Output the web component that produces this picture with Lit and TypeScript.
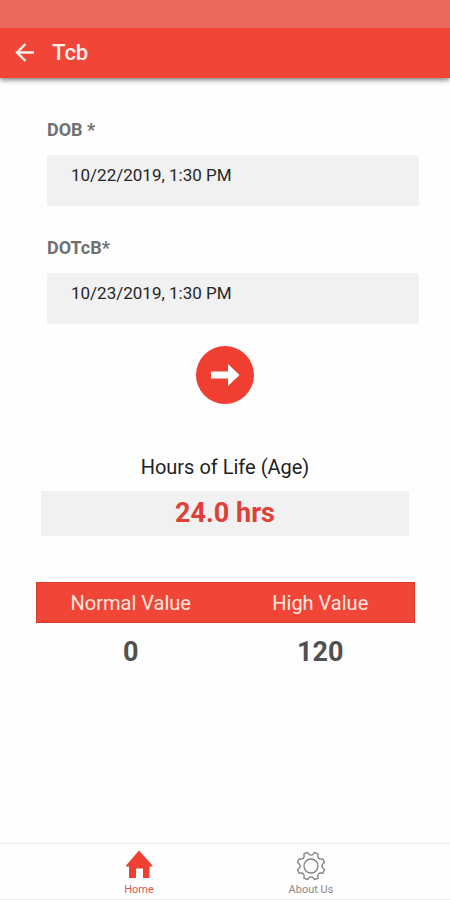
import { LitElement, html, css } from "lit";
import { customElement, state } from "lit/decorators.js";

/** Outline of an eight-toothed gear centred on the origin. */
function gearPath(outer: number, root: number, teeth: number): string {
  const step = 360 / teeth;
  const at = (r: number, deg: number) => {
    const a = (deg * Math.PI) / 180;
    return `${(r * Math.cos(a)).toFixed(2)} ${(r * Math.sin(a)).toFixed(2)}`;
  };
  let d = "";
  for (let i = 0; i < teeth; i++) {
    const mid = step / 2 + i * step;
    d += `${i === 0 ? "M" : "L"}${at(outer, mid - 8)}`;
    d += `L${at(outer, mid + 8)}`;
    d += `L${at(root + 1, mid + 12)}`;
    d += `Q${at(root - 1, mid + step / 2)} ${at(root + 1, mid + step - 12)}`;
  }
  return d + "Z";
}

@customElement("app-root")
export class AppRoot extends LitElement {
  @state() private dob = "10/22/2019, 1:30 PM";
  @state() private measured = "10/23/2019, 1:30 PM";

  static styles = css`
    :host {
      display: flex;
      flex-direction: column;
      min-height: 100vh;
      background: #fefefe;
      font-family: Roboto, "Liberation Sans", sans-serif;
      color: #222;
    }
    * {
      box-sizing: border-box;
    }
    .status {
      height: 28px;
      background: #e8685b;
    }
    .bar {
      display: flex;
      align-items: center;
      gap: 16px;
      height: 50px;
      padding: 0 14px;
      background: #f14637;
      box-shadow: 0 2px 5px rgba(0, 0, 0, 0.5);
      clip-path: inset(0 0 -10px);
    }
    .back {
      display: flex;
      padding: 0;
      border: 0;
      background: none;
      color: #fff0ea;
    }
    .title {
      margin: 0;
      font-size: 22px;
      line-height: 28px;
      font-weight: 500;
      color: #fff0ea;
    }
    main {
      flex: 1;
    }
    .form {
      display: flex;
      flex-direction: column;
      padding: 40px 31px 0 47px;
    }
    .label {
      font-size: 18px;
      line-height: 24px;
      font-weight: 700;
      color: #707070;
    }
    .field {
      width: 100%;
      height: 51px;
      margin: 13px 0 30px;
      padding: 0 24px 12px;
      border: 0;
      border-radius: 2px;
      background: #f1f1f1;
      font: 400 17px Roboto, "Liberation Sans", sans-serif;
      color: #262626;
    }
    .go {
      display: flex;
      align-items: center;
      justify-content: center;
      width: 58px;
      height: 58px;
      margin: -8px auto 0;
      padding: 0;
      border: 0;
      border-radius: 50%;
      background: #f03e31;
      color: #fff;
    }
    .result {
      margin: 51px 41px 0;
      text-align: center;
    }
    .caption {
      margin: 0;
      font-size: 20px;
      line-height: 24px;
      font-weight: 400;
    }
    .hours {
      display: block;
      margin-top: 12px;
      background: #f1f1f1;
      font-size: 27px;
      line-height: 45px;
      font-weight: 700;
      color: #e03f35;
    }
    .values {
      width: calc(100% - 71px);
      margin: 46px 35px 0 36px;
      border-collapse: separate;
      border-spacing: 0;
      table-layout: fixed;
      text-align: center;
    }
    .values thead {
      background: #f14637;
      outline: 1px solid #d63a2e;
      outline-offset: -1px;
    }
    .values th {
      height: 41px;
      padding: 0;
      font-size: 20px;
      font-weight: 400;
      color: #ffe6df;
    }
    .values td {
      height: 57px;
      padding: 0;
      font-size: 27px;
      font-weight: 700;
      color: #505050;
    }
    .tabs {
      display: flex;
      height: 57px;
      padding: 0 53px;
      border-top: 1px solid #ececec;
      border-bottom: 1px solid #ececec;
    }
    .tab {
      flex: 1;
      display: flex;
      flex-direction: column;
      align-items: center;
      padding-top: 6px;
      font-size: 11px;
      line-height: 16px;
      color: #8a8a8a;
      text-decoration: none;
    }
    .tab.active {
      color: #d95a50;
    }
    .icon {
      display: block;
      width: 32px;
      height: 32px;
    }
  `;

  private edit(key: "dob" | "measured") {
    return (e: Event) => {
      this[key] = (e.target as HTMLInputElement).value;
    };
  }

  render() {
    return html`
      <div class="status"></div>
      <header class="bar">
        <button class="back" aria-label="Back">
          <svg width="22" height="22" viewBox="0 0 22 22" fill="none" stroke="currentColor" stroke-width="2.400">
            <path d="M20 10.500H3.500M11.500 2L3 10.500l8.500 8.500" />
          </svg>
        </button>
        <h1 class="title">Tcb</h1>
      </header>
      <main>
        <form class="form" @submit=${(e: Event) => e.preventDefault()}>
          <label class="label" for="dob">DOB *</label>
          <input class="field" id="dob" type="text" .value=${this.dob} @input=${this.edit("dob")} />
          <label class="label" for="dotcb">DOTcB*</label>
          <input class="field" id="dotcb" type="text" .value=${this.measured} @input=${this.edit("measured")} />
        </form>
        <button class="go" type="button" aria-label="Calculate">
          <svg width="30" height="24" viewBox="0 0 30 24" fill="currentColor">
            <path d="M1 8.500H18V1L29.500 12 18 23V15.500H1Z" />
          </svg>
        </button>
        <section class="result">
          <h2 class="caption">Hours of Life (Age)</h2>
          <output class="hours">24.0 hrs</output>
        </section>
        <table class="values">
          <thead>
            <tr><th scope="col">Normal Value</th><th scope="col">High Value</th></tr>
          </thead>
          <tbody>
            <tr><td>0</td><td>120</td></tr>
          </tbody>
        </table>
      </main>
      <nav class="tabs">
        <a class="tab active" href="#home">
          <svg class="icon" viewBox="-16 -16 32 32">
            <path
              d="M0-15.500L13.500-.5V.5H10.500V12H4V2.500H-3V12H-10V.5H-13V-.5Z"
              fill="#ef4032"
            />
          </svg>
          Home
        </a>
        <a class="tab" href="#about">
          <svg class="icon" viewBox="-16 -16 32 32" fill="none" stroke="#808080" stroke-width="1.300" stroke-linejoin="round">
            <path d=${gearPath(14, 11, 8)} />
            <circle r="7" />
          </svg>
          About Us
        </a>
      </nav>
    `;
  }
}
